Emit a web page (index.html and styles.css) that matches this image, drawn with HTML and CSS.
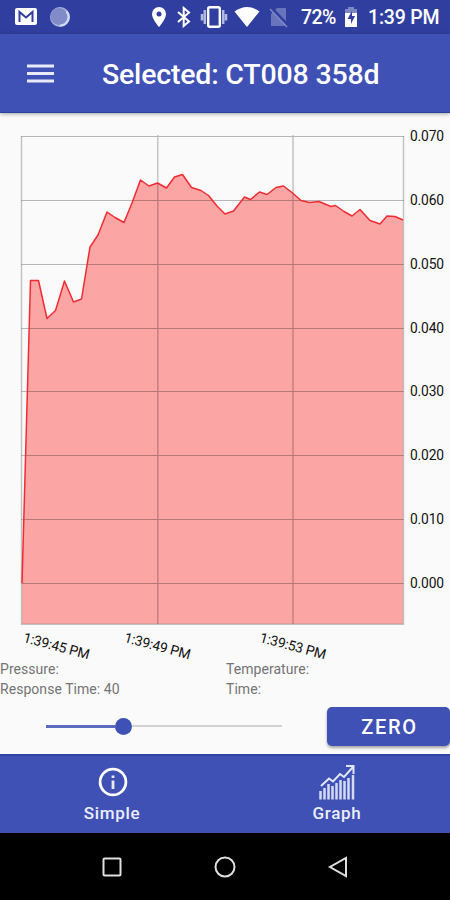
FILE: index.html
```html
<!DOCTYPE html>
<html lang="en">
<head>
<meta charset="utf-8">
<title>Pressure graph</title>
<link rel="stylesheet" href="styles.css">
</head>
<body>
<div class="status">
  <svg class="mail" width="24" height="20" viewBox="0 0 24 20"><rect x="1" y="1" width="22" height="17" rx="2" fill="#fff"/><path d="M5.500 15V5L12 10.500 18.500 5V15" fill="none" stroke="#303f9f" stroke-width="2"/></svg>
  <svg class="orb" width="22" height="22" viewBox="0 0 22 22"><circle cx="11" cy="11" r="10" fill="#a9b4df"/><circle cx="10" cy="10.500" r="8.500" fill="#818bc7"/><path d="M17.500 5.500A8.500 8.500 0 0 1 11 19.500" fill="none" stroke="#d3dcf3" stroke-width="2"/></svg>
  <svg class="pin" width="16" height="22" viewBox="0 0 16 22"><path d="M8 1a7 7 0 0 0-7 7c0 5 7 13 7 13s7-8 7-13a7 7 0 0 0-7-7z" fill="#fff"/><circle cx="8" cy="8" r="2.500" fill="#303f9f"/></svg>
  <svg class="bluetooth" width="16" height="22" viewBox="0 0 16 22"><path d="M2 6l11 9.500-5.300 4.500V2L13 6.500 2 16" fill="none" stroke="#fff" stroke-width="2"/></svg>
  <svg class="vibrate" width="28" height="24" viewBox="0 0 28 24"><rect x="8.200" y="2.200" width="11.600" height="19.600" rx="1.500" fill="none" stroke="#fff" stroke-width="2.400"/><path d="M4.800 5v14M23.200 5v14M2 9v6.500M26 9v6.500" stroke="#b3bae2" stroke-width="2.500"/></svg>
  <svg class="wifi" width="26" height="22" viewBox="0 0 26 22"><path d="M.5 5.500Q13-3.500 25.500 5.500L13 21z" fill="#fff"/></svg>
  <svg class="nosim" width="20" height="22" viewBox="0 0 20 22"><path d="M8 2h9v18H2V8z" fill="#6974bb"/><path d="M2 1.500l17 18" stroke="#303f9f" stroke-width="3"/><path d="M1 3l17 18" stroke="#7f8ac8" stroke-width="1.500"/></svg>
  <span class="percent">72%</span>
  <svg class="battery" width="14" height="22" viewBox="0 0 14 22"><path d="M1 3h3V1h6v2h3v4H1z" fill="#7d87c4"/><path d="M1 7h12v14H1z" fill="#fff"/><path d="M8 5L3.500 13H7v5l4-8H8z" fill="#303f9f"/></svg>
  <span class="clock">1:39 PM</span>
</div>
<header class="appbar">
  <svg class="menu" width="27" height="20" viewBox="0 0 27 20"><path d="M0 2h27M0 9.500h27M0 17h27" stroke="#e8eafa" stroke-width="3.200"/></svg>
  <h1>Selected: CT008 358d</h1>
</header>
<main>
  <svg class="chart" width="450" height="547" viewBox="0 113 450 547">
    <path class="area" d="M22 583L30.500 280.500H38.500L47 318.500 55.500 310.500 64.500 281 73.500 302 81.500 299 90 247 98 235 107 212 115 217.500 124 222.500 132 203 140.500 180 149 186 157.500 183 166.500 188 174.500 177 182.500 174.500 191.500 187.500 201 190.500 208.500 195.500 217 206 225 214 233.500 211 244.500 197 250.500 199.500 259.500 192 267 194.500 276 187.500 283.500 186 292 192.500 301 200.500 309.500 202.500 319 201.500 331 206.500 335.500 205.500 344 211.500 352 216 360 209.500 370 220.500 380 224 387 216 395 216.500 403 220V624H22z"/>
    <path class="grid" d="M21 136.500H404M21 200.500H404M21 264.500H404M21 328.500H404M21 391.500H404M21 455.500H404M21 519.500H404M21 583.500H404M157.800 135V624M293 135V624"/>
    <path class="frame" d="M21.500 136V624.300H403.500V136"/>
    <path class="line" d="M22 583L30.500 280.500H38.500L47 318.500 55.500 310.500 64.500 281 73.500 302 81.500 299 90 247 98 235 107 212 115 217.500 124 222.500 132 203 140.500 180 149 186 157.500 183 166.500 188 174.500 177 182.500 174.500 191.500 187.500 201 190.500 208.500 195.500 217 206 225 214 233.500 211 244.500 197 250.500 199.500 259.500 192 267 194.500 276 187.500 283.500 186 292 192.500 301 200.500 309.500 202.500 319 201.500 331 206.500 335.500 205.500 344 211.500 352 216 360 209.500 370 220.500 380 224 387 216 395 216.500 403 220"/>
    <g class="ticks">
      <text x="410" y="141" textLength="34">0.070</text>
      <text x="410" y="205" textLength="34">0.060</text>
      <text x="410" y="269" textLength="34">0.050</text>
      <text x="410" y="332.500" textLength="34">0.040</text>
      <text x="410" y="396" textLength="34">0.030</text>
      <text x="410" y="460" textLength="34">0.020</text>
      <text x="410" y="524" textLength="34">0.010</text>
      <text x="410" y="587.500" textLength="34">0.000</text>
      <text transform="translate(22.500 641.800) rotate(15)" textLength="68">1:39:45 PM</text>
      <text transform="translate(123.500 641.800) rotate(15)" textLength="68">1:39:49 PM</text>
      <text transform="translate(259 641.800) rotate(15)" textLength="68">1:39:53 PM</text>
    </g>
  </svg>
  <section class="readings">
    <span>Pressure:</span><span>Temperature:</span>
    <span>Response Time: 40</span><span>Time:</span>
  </section>
  <section class="controls">
    <div class="slider"><i class="filled"></i><i class="thumb"></i><i class="rest"></i></div>
    <button>ZERO</button>
  </section>
</main>
<nav class="tabs">
  <div class="tab">
    <svg width="30" height="30" viewBox="0 0 30 30"><circle cx="15" cy="15" r="12.900" fill="none" stroke="#fff" stroke-width="2.800"/><path d="M15 13.500V22M15 8.500v2.600" stroke="#e8eafa" stroke-width="2.800"/></svg>
    <span>Simple</span>
  </div>
  <div class="tab">
    <svg class="bars" width="38" height="36" viewBox="0 0 38 36"><path d="M1.500 27v8.500M5.500 24v11.500M9.500 20v15.500M13.500 22v13.500M17.500 19v16.500M21.500 16v19.500M25.500 17v18.500M29.500 14v21.500M34 11v24.500" stroke="#d5daf3" stroke-width="2.500"/><path d="M2 22L10 14.500 14 17.500 21 10 25 13 34 3M27 2h7.500v8" fill="none" stroke="#e3e7fa" stroke-width="2"/></svg>
    <span>Graph</span>
  </div>
</nav>
<footer class="system">
  <svg width="22" height="22" viewBox="0 0 22 22"><rect x="2.500" y="2.500" width="17" height="17" rx="1"/></svg>
  <svg width="22" height="22" viewBox="0 0 22 22"><circle cx="11" cy="11" r="9.500"/></svg>
  <svg width="22" height="22" viewBox="0 0 22 22"><path d="M19 2v18L3 11z"/></svg>
</footer>
</body>
</html>
```
FILE: styles.css
```css
* { box-sizing: border-box; }
body { margin: 0; width: 450px; height: 900px; overflow: hidden; display: flex; flex-direction: column; background: #fafafa; font-family: Roboto, sans-serif; }
svg { display: block; flex: none; }
.status { height: 34px; flex: none; display: flex; align-items: center; background: #303f9f; color: #fff; font-size: 19.500px; font-weight: 500; line-height: 34px; white-space: nowrap; }
.mail { margin-left: 14px; }
.orb { margin-left: 11px; }
.pin { margin-left: 80px; }
.bluetooth { margin-left: 9px; }
.vibrate { margin-left: 8px; }
.wifi { margin-left: 6px; }
.nosim { margin-left: 9px; }
.percent { margin-left: 12px; width: 37px; letter-spacing: -.6px; padding-top: 2px; }
.battery { margin-left: 6px; }
.clock { margin-left: 10px; padding-top: 2px; letter-spacing: -.2px; }
.appbar { height: 79px; flex: none; display: flex; align-items: center; background: #3f51b5; border-bottom: 1px solid #303f9f; box-shadow: 0 1px 4px rgba(0,0,0,.35); position: relative; }
.menu { margin-left: 26.500px; margin-top: 1px; }
h1 { margin: 3px 0 0 48.500px; color: #fff; font-size: 28.500px; font-weight: 500; letter-spacing: -.2px; line-height: 40px; white-space: nowrap; }
main { height: 641px; flex: none; }
.chart { overflow: visible; }
.area { fill: #ff0000; fill-opacity: .34; }
.line { fill: none; stroke: #f02c32; stroke-width: 1.500; stroke-linejoin: round; }
.grid { fill: none; stroke: #000; stroke-opacity: .27; stroke-width: 1.200; }
.frame { fill: none; stroke: #888; stroke-opacity: .5; stroke-width: 1.400; }
.ticks { font-size: 13.800px; fill: #111; }
.readings { height: 38px; display: grid; grid-template-columns: 226px 1fr; grid-auto-rows: 19.500px; line-height: 19px; font-size: 14px; color: #747474; letter-spacing: .05px; }
.controls { height: 56px; display: flex; align-items: center; }
.slider { width: 236px; margin-left: 46px; display: flex; align-items: center; }
.filled { width: 68.500px; height: 3px; background: #5c6bc0; }
.thumb { width: 17px; height: 17px; border-radius: 50%; background: #3f51b5; }
.rest { flex: 1; height: 2px; background: #d2d2d2; }
button { width: 123px; height: 39px; margin-left: 45px; padding: 1px 0 0 2px; border: 0; border-radius: 5px; background: #3f51b5; color: #fff; font: 500 20px/38px Roboto, sans-serif; letter-spacing: 1.700px; box-shadow: 0 2px 3px rgba(0,0,0,.35); }
.tabs { height: 79px; flex: none; display: flex; background: #3f51b5; border-top: 2px solid #3044a8; }
.tab { flex: 1; display: flex; flex-direction: column; align-items: center; padding-top: 11px; color: #eceefa; font-size: 17px; font-weight: 500; letter-spacing: .7px; }
.tab span { line-height: 20px; margin-top: 6px; margin-right: 1px; }
.bars { margin-top: -3px; margin-bottom: -3px; }
.system { height: 67px; flex: none; display: flex; align-items: center; justify-content: space-between; padding: 0 101px 0 101px; background: #000; }
.system svg { fill: none; stroke: #e0e0e0; stroke-width: 2; }
```
